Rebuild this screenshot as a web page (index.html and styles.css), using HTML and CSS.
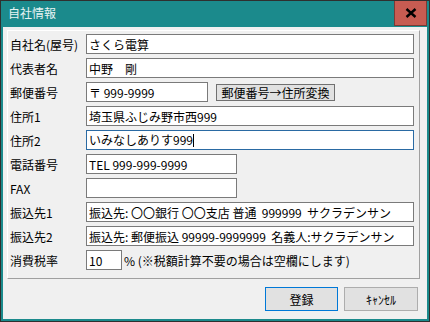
FILE: index.html
```html
<!DOCTYPE html>
<html lang="ja">
<head>
  <meta charset="UTF-8" />
  <title>自社情報</title>
  <link rel="stylesheet" href="styles.css">
</head>
<body>
  <div class="window">
    <div class="titlebar">
      <span class="title">自社情報</span>
      <button class="btn-close" aria-label="閉じる">
        <svg width="12" height="10" viewBox="0 0 12 10">
          <path d="M1.5 1 L10.5 9 M10.5 1 L1.5 9" stroke="#000" stroke-width="2.4" />
        </svg>
      </button>
    </div>

    <div class="client">
      <div class="panel">
        <div class="row">
          <label>自社名(屋号)</label>
          <input class="field wide" type="text" value="さくら電算" />
        </div>
        <div class="row">
          <label>代表者名</label>
          <input class="field wide" type="text" value="中野　剛" />
        </div>
        <div class="row">
          <label>郵便番号</label>
          <input class="field zip" type="text" value="〒 999-9999" />
          <button class="btn-small">郵便番号→住所変換</button>
        </div>
        <div class="row">
          <label>住所1</label>
          <input class="field wide" type="text" value="埼玉県ふじみ野市西999" />
        </div>
        <div class="row">
          <label>住所2</label>
          <div class="field wide focused">いみなしありす999<span class="caret"></span></div>
        </div>
        <div class="row">
          <label>電話番号</label>
          <input class="field tel" type="text" value="TEL 999-999-9999" />
        </div>
        <div class="row">
          <label>FAX</label>
          <input class="field tel" type="text" value="" />
        </div>
        <div class="row">
          <label>振込先1</label>
          <input class="field wide" type="text" value="振込先: 〇〇銀行 〇〇支店 普通  999999  サクラデンサン" />
        </div>
        <div class="row">
          <label>振込先2</label>
          <input class="field wide" type="text" value="振込先: 郵便振込 99999-9999999  名義人:サクラデンサン" />
        </div>
        <div class="row">
          <label>消費税率</label>
          <input class="field tax" type="text" value="10" />
          <span class="note">% (※税額計算不要の場合は空欄にします)</span>
        </div>
      </div>

      <div class="actions">
        <button class="btn default">登録</button>
        <button class="btn">ｷｬﾝｾﾙ</button>
      </div>
    </div>
  </div>
</body>
</html>
```

FILE: styles.css
```css
:root {
  --teal: #1b8a8c;
  --face: #f0f0f0;
  --edge: #7a7a7a;
  --btn: #e1e1e1;
  --focus: #2a6aa3;
}

body {
  margin: 0;
  font-family: "Noto Sans CJK JP", sans-serif;
  font-size: 12px;
  color: #000;
}

.window {
  width: 430px;
  height: 322px;
  box-sizing: border-box;
  border: 1px solid #2f2f2f;
  background: var(--teal);
  padding: 0 2px 2px 2px;
  display: flex;
  flex-direction: column;
}

.titlebar {
  height: 26px;
  display: flex;
  justify-content: space-between;
  align-items: flex-start;
  margin: 0 -1px 0 0;
}

.title {
  color: #e6f3f3;
  padding: 4px 0 0 5px;
  line-height: 16px;
}

.btn-close {
  width: 33px;
  height: 25px;
  margin: 0 1px 0 0;
  padding: 0;
  border: 1px solid #7a3a35;
  border-top: none;
  background: #c75c52;
  display: flex;
  align-items: center;
  justify-content: center;
}

.client {
  flex: 1;
  background: var(--face);
  padding: 3px 7px 0 4px;
}

.panel {
  border: 1px solid #a0a0a0;
  border-left-color: #fff;
  border-top-color: #fff;
  padding: 3px 0 8px 2px;
  display: flex;
  flex-direction: column;
  gap: 4px;
}

.row {
  display: flex;
  align-items: center;
  height: 20px;
}

.row label {
  width: 76px;
  flex: none;
}

.field {
  box-sizing: border-box;
  height: 20px;
  border: 1px solid var(--edge);
  background: #fff;
  padding: 0 2px;
  margin: 0;
  font: inherit;
  color: #000;
  line-height: 18px;
  outline: none;
}

.wide { width: 328px; }
.zip { width: 122px; }
.tel { width: 151px; }
.tax { width: 36px; }

.focused {
  border-color: var(--focus);
  white-space: nowrap;
}

.caret {
  display: inline-block;
  width: 1px;
  height: 13px;
  background: #000;
  vertical-align: -2px;
}

.btn-small {
  height: 17px;
  width: 119px;
  margin-left: 8px;
  padding: 0;
  border: 1px solid #707070;
  background: var(--btn);
  font: inherit;
  line-height: 15px;
}

.note {
  margin-left: 2px;
  white-space: nowrap;
}

.actions {
  display: flex;
  justify-content: flex-end;
  gap: 6px;
  margin-top: 8px;
  padding-right: 2px;
}

.btn {
  width: 73px;
  height: 24px;
  padding: 0;
  border: 1px solid #adadad;
  background: var(--btn);
  font: inherit;
}

.btn.default {
  border-color: #0078d7;
}

.btn + .btn {
  width: 74px;
}
```
